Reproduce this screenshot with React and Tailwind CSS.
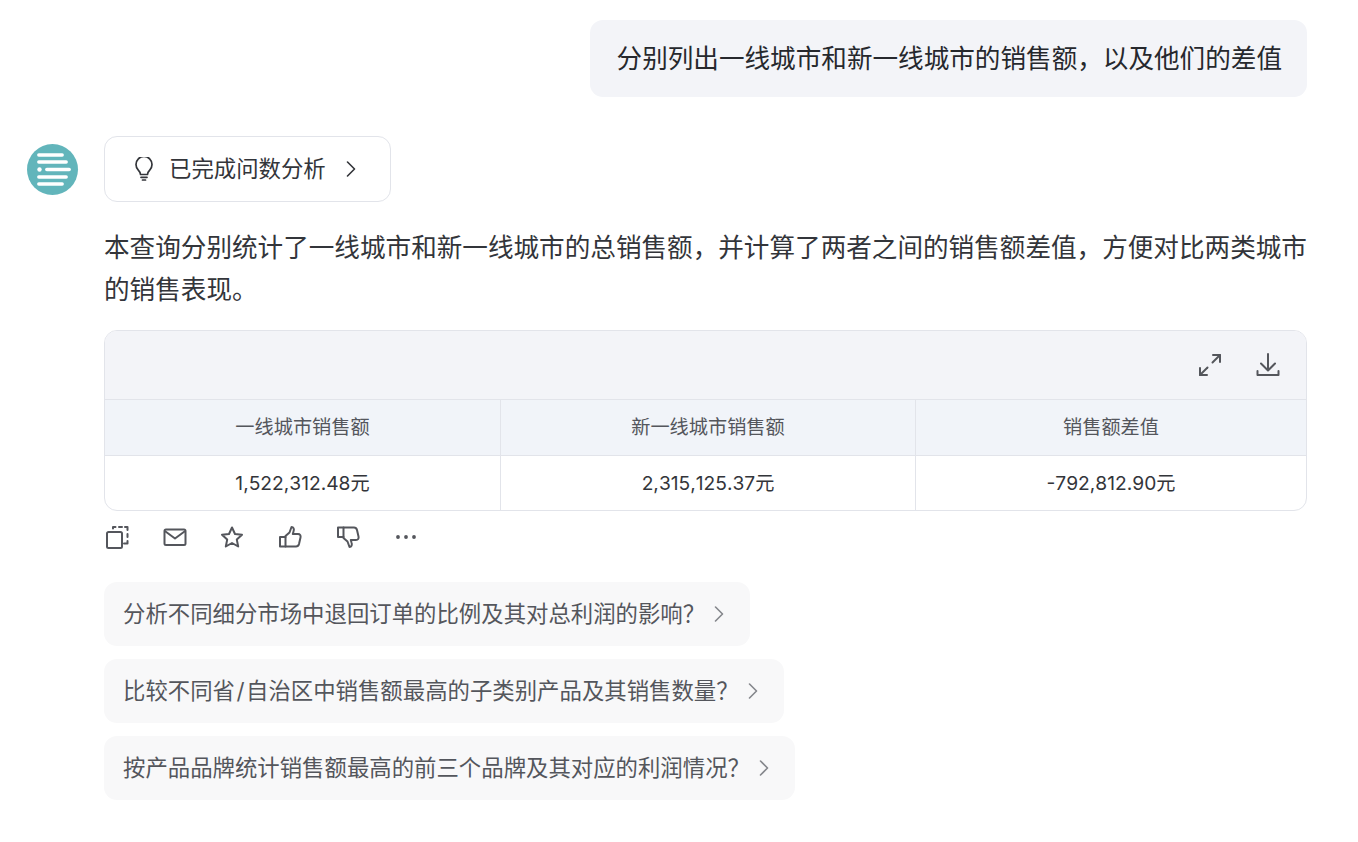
import React from "react";
import { ChevronRight } from "lucide-react";

const font = "font-['Inter','Noto_Sans_CJK_SC',sans-serif]";

const columns = [
  { title: "一线城市销售额", value: "1,522,312.48元", width: "w-[396px]" },
  { title: "新一线城市销售额", value: "2,315,125.37元", width: "w-[415px]" },
  { title: "销售额差值", value: "-792,812.90元", width: "flex-1" },
];

const suggestions = [
  <>分析不同细分市场中退回订单的比例及其对总利润的影响？</>,
  <>比较不同省<span className="mx-[1.5px]">/</span>自治区中销售额最高的子类别产品及其销售数量？</>,
  <>按产品品牌统计销售额最高的前三个品牌及其对应的利润情况？</>,
];

const Icon = ({ children, className = "w-[26px] h-[26px]" }) => (
  <svg
    viewBox="0 0 26 26"
    fill="none"
    stroke="#54565c"
    strokeWidth="2"
    strokeLinecap="round"
    strokeLinejoin="round"
    className={className}
  >
    {children}
  </svg>
);

const Logo = () => (
  <svg viewBox="0 0 52 52" className="w-[52px] h-[52px] shrink-0">
    <circle cx="25.5" cy="25.5" r="25.5" fill="#62b5bb" />
    <g stroke="#fff" strokeWidth="3.4" strokeLinecap="round">
      <path d="M11.8 11h23.4" />
      <path d="M11.8 18h27.4" />
      <path d="M19.8 25.5h22.4" />
      <path d="M11.8 33h27.4" />
      <path d="M11.8 40h23.4" />
    </g>
    <circle cx="12.5" cy="25.5" r="2.2" fill="#fff" />
  </svg>
);

export default function App() {
  return (
    <div className={`${font} w-[1358px] h-[842px] bg-white overflow-hidden pt-5 pl-[27px] pr-[51px]`}>
      <div className="flex justify-end">
        <div className="h-[77px] pl-[27px] pr-[25px] pt-[2px] flex items-center rounded-[13px] bg-[#f3f4f8] text-[25.6px] text-[#26282d] whitespace-nowrap">
          分别列出一线城市和新一线城市的销售额，以及他们的差值
        </div>
      </div>

      <div className="flex mt-[39px] gap-[25px]">
        <div className="pt-[8px]">
          <Logo />
        </div>
        <div className="flex-1 min-w-0">
          <div className="inline-flex items-center h-[66px] w-[287px] pl-[29px] pb-[1px] rounded-[13px] border border-[#e2e4ea] text-[22.4px] text-[#33353a]">
            <svg viewBox="0 0 20 24" fill="none" stroke="#33353a" strokeWidth="1.7" strokeLinecap="round" strokeLinejoin="round" className="w-[20px] h-[24px] shrink-0">
              <path d="M6.5 17.5c0-2-.8-3-2.2-4.4a8 8 0 1 1 11.4 0c-1.4 1.4-2.2 2.4-2.2 4.4z" />
              <path d="M7 20.3h6" />
              <path d="M8.5 23h3" />
            </svg>
            <span className="ml-[15px] whitespace-nowrap">已完成问数分析</span>
            <ChevronRight size={28} strokeWidth={1.4} color="#33353a" className="ml-[11px]" />
          </div>

          <p className="mt-[25px] text-[25.6px] leading-[42px] text-[#33353a]">
            本查询分别统计了一线城市和新一线城市的总销售额，并计算了两者之间的销售额差值，方便对比两类城市的销售表现。
          </p>

          <div className="mt-[19px] rounded-[13px] border border-[#e2e4ea] overflow-hidden">
            <div className="h-[68px] bg-[#f3f4f8] flex items-center justify-end gap-[32px] pr-[25px]">
              <Icon>
                <path d="M15.5 10.5 L23 3" />
                <path d="M16 3h7v7" />
                <path d="M10.5 15.5 L3 23" />
                <path d="M3 16v7h7" />
              </Icon>
              <Icon>
                <path d="M13 2v16" />
                <path d="M6 11.5 L13 18.5 L20 11.5" />
                <path d="M2.5 19v4h21v-4" />
              </Icon>
            </div>
            <div className="flex h-[56px] bg-[#f1f4f9] border-t border-[#e2e4ea] text-[19.2px] text-[#54565c]">
              {columns.map((col, i) => (
                <div key={col.title} className={`${col.width} flex items-center justify-center ${i < 2 ? "border-r border-[#e2e4ea]" : ""}`}>
                  {col.title}
                </div>
              ))}
            </div>
            <div className="flex h-[55px] border-t border-[#e2e4ea] text-[19.2px] text-[#33353a] [font-kerning:none]">
              {columns.map((col, i) => (
                <div key={col.title} className={`${col.width} flex items-center justify-center ${i < 2 ? "border-r border-[#e2e4ea]" : ""}`}>
                  {col.value}
                </div>
              ))}
            </div>
          </div>

          <div className="flex items-center gap-[31.7px] mt-[13px] h-[26px]">
            <Icon>
              <path d="M3 9.5a1.5 1.5 0 0 1 1.5-1.5h12a1.5 1.5 0 0 1 1.5 1.5v13a1.5 1.5 0 0 1-1.5 1.5h-12a1.5 1.5 0 0 1-1.5-1.5z" />
              <path d="M9 4.5V3h2.5M15 3h3M21 3h2.5v3M23.5 10v3M23.5 17v2.5H20" />
            </Icon>
            <Icon>
              <rect x="2.5" y="5.5" width="21" height="15.5" rx="1.5" />
              <path d="M3.5 7.5 L13 14.5 L22.5 7.5" />
            </Icon>
            <Icon>
              <path d="M13 3.5 L16 10 L23 10.8 L17.8 15.6 L19.2 22.5 L13 19 L6.8 22.5 L8.2 15.6 L3 10.8 L10 10 Z" />
            </Icon>
            <Icon>
              <path d="M8.5 12 L12.5 8.5 L14.5 3 C16.5 3 17.5 5 16.5 7.5 L15.8 10 H21 C23 10 24 11.5 23.5 13.5 L22 20 C21.6 21.5 20.8 22.5 19 22.5 H8.5 Z" />
              <path d="M8.5 13 H3 V22.5 H8.5" />
            </Icon>
            <Icon>
              <path d="M8.5 14 L12.5 17.5 L14.5 23 C16.5 23 17.5 21 16.5 18.5 L15.8 16 H21 C23 16 24 14.5 23.5 12.5 L22 6 C21.6 4.5 20.8 3.5 19 3.5 H8.5 Z" />
              <path d="M8.5 13 H3 V3.5 H8.5" />
            </Icon>
            <Icon>
              <circle cx="6" cy="13" r="0.9" />
              <circle cx="14" cy="13" r="0.9" />
              <circle cx="22" cy="13" r="0.9" />
            </Icon>
          </div>

          <div className="flex flex-col items-start gap-[13px] mt-[32px]">
            {suggestions.map((text, i) => (
              <div key={i} className="inline-flex items-center h-[64px] pl-[19px] pr-[17px] rounded-[13px] bg-[#f8f8f9] text-[22.4px] text-[#54565c] whitespace-nowrap">
                {text}
                <ChevronRight size={28} strokeWidth={1.4} color="#85878c" />
              </div>
            ))}
          </div>
        </div>
      </div>
    </div>
  );
}
